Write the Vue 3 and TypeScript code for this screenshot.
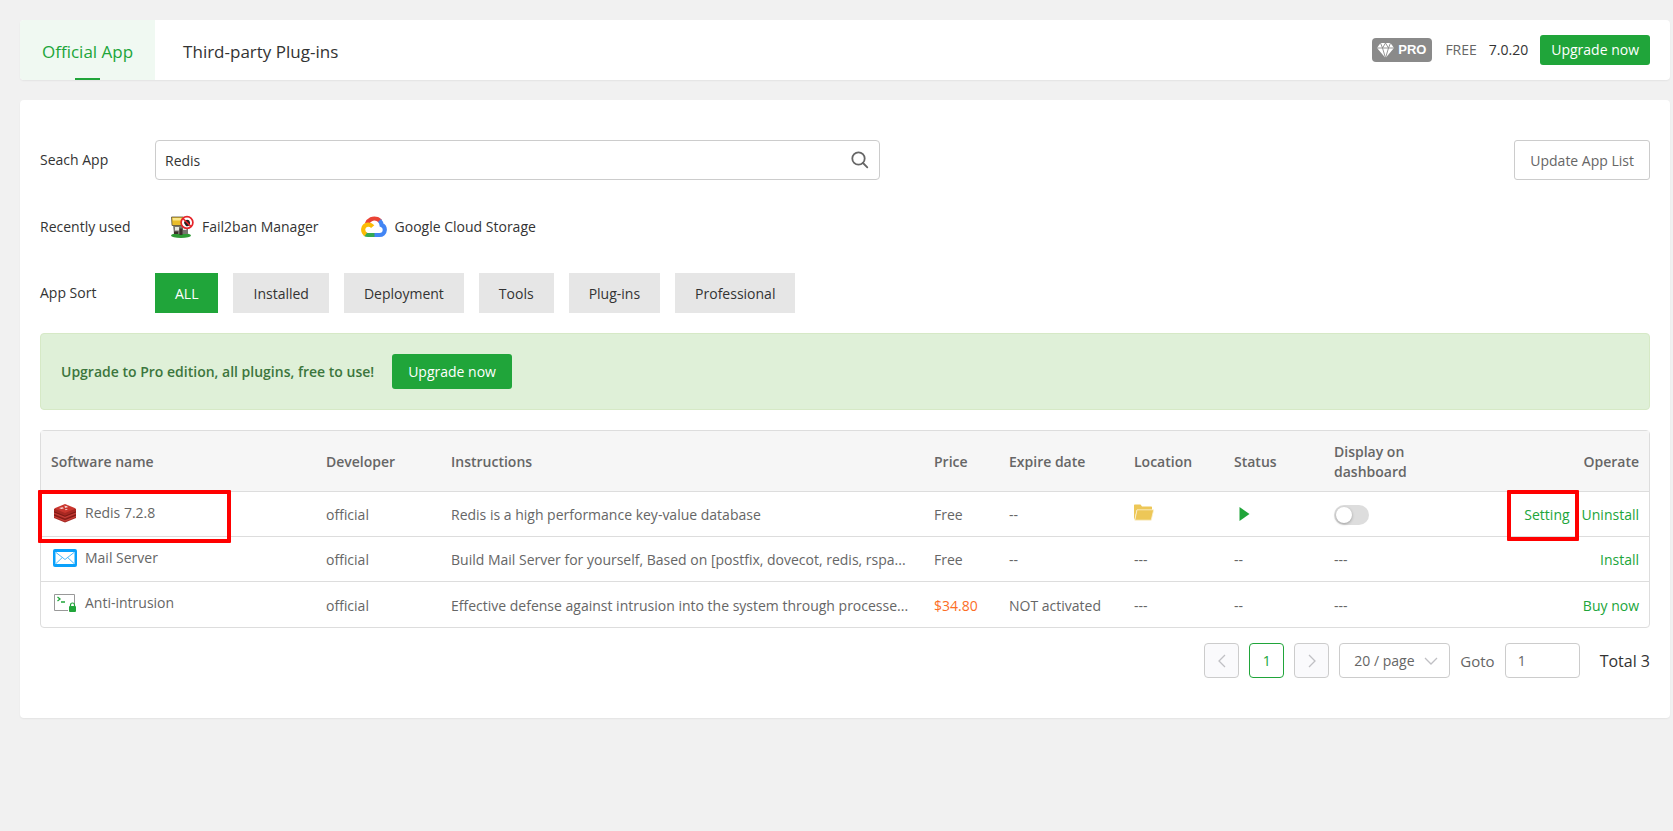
<script setup lang="ts">
import { ref } from 'vue'

interface App {
  id: string
  name: string
  developer: string
  instructions: string
  price: string
  paid?: boolean
  expire: string
  installed?: boolean
  actions: string[]
}

const tabs = ['Official App', 'Third-party Plug-ins']
const activeTab = ref('Official App')

const keyword = ref('Redis')

const sorts = ['ALL', 'Installed', 'Deployment', 'Tools', 'Plug-ins', 'Professional']
const activeSort = ref('ALL')

const apps: App[] = [
  {
    id: 'redis',
    name: 'Redis 7.2.8',
    developer: 'official',
    instructions: 'Redis is a high performance key-value database',
    price: 'Free',
    expire: '--',
    installed: true,
    actions: ['Setting', 'Uninstall'],
  },
  {
    id: 'mail',
    name: 'Mail Server',
    developer: 'official',
    instructions: 'Build Mail Server for yourself, Based on [postfix, dovecot, redis, rspa...',
    price: 'Free',
    expire: '--',
    actions: ['Install'],
  },
  {
    id: 'intrusion',
    name: 'Anti-intrusion',
    developer: 'official',
    instructions: 'Effective defense against intrusion into the system through processe...',
    price: '$34.80',
    paid: true,
    expire: 'NOT activated',
    actions: ['Buy now'],
  },
]

const onDashboard = ref(false)
const pageSize = ref('20')
const gotoPage = ref('1')
</script>

<template>
  <div class="page">
    <header class="topbar">
      <nav class="tabs">
        <button
          v-for="tab in tabs"
          :key="tab"
          type="button"
          class="tab"
          :class="{ active: tab === activeTab }"
          @click="activeTab = tab"
        >
          {{ tab }}
        </button>
      </nav>
      <div class="account">
        <span class="pro">
          <svg width="17" height="15" viewBox="0 0 17 15" aria-hidden="true">
            <path d="M3.5 0h10L17 5 8.5 15 0 5z" fill="#fff" />
            <path d="M0 5h17M5.500 5 8.500 15 11.500 5M3.500 0l2 5 3-5 3 5 2-5" fill="none" stroke="#8a8a8a" stroke-width=".9" />
          </svg>
          PRO
        </span>
        <span class="free">FREE</span>
        <span class="version">7.0.20</span>
        <button type="button" class="btn-green small">Upgrade now</button>
      </div>
    </header>

    <main class="panel">
      <div class="row search-row">
        <label class="label" for="app-search">Seach App</label>
        <div class="search">
          <input id="app-search" v-model="keyword" type="text" />
          <button type="button" class="search-btn" aria-label="Search">
            <svg width="18" height="18" viewBox="0 0 18 18" fill="none" stroke="#666" stroke-width="1.8" stroke-linecap="round">
              <circle cx="7.500" cy="7.500" r="6.200" />
              <path d="M12 12l4.300 4.300" />
            </svg>
          </button>
        </div>
        <button type="button" class="btn-outline">Update App List</button>
      </div>

      <div class="row recent-row">
        <span class="label">Recently used</span>
        <div class="recent">
          <a href="#" class="recent-item">
            <svg width="24" height="24" viewBox="0 0 24 24" aria-hidden="true">
              <ellipse cx="11" cy="20.500" rx="10" ry="2.600" fill="#2f9a35" />
              <path d="M3 10h15v9H4z" fill="#77756f" />
              <path d="M5 12h4v3.500H5zM13 12h3.500v3H13z" fill="#e8e8e0" />
              <path d="M9.500 13.500h3V20h-3zM4 16.500h4V19H4z" fill="#3b302b" />
              <path d="M1.500 2h12l4 8.500H2z" fill="#e9bd2b" stroke="#5b5440" stroke-width=".8" />
              <path d="M2.500 3h9v2.500H3z" fill="#fbe789" />
              <circle cx="17" cy="7.500" r="5.900" fill="#fff" />
              <path d="M14 8c0-3 5-5 6-.5.500 3-2 4.500-4 3.500z" fill="#222" />
              <circle cx="17" cy="7.500" r="5.900" fill="none" stroke="#e5252b" stroke-width="1.700" />
              <path d="M13 3.500l8 8" stroke="#e5252b" stroke-width="1.700" />
            </svg>
            Fail2ban Manager
          </a>
          <a href="#" class="recent-item">
            <svg width="26" height="22" viewBox="0 0 26 22" fill="none" stroke-width="4.200" aria-hidden="true">
              <path d="M5.800 8C7.500 3.500 12 1.500 16.300 3a8 8 0 0 1 3 2.200" stroke="#ea4335" />
              <path d="M18.500 4.500c1.200 1.200 1.900 2.600 2.100 4.500 2 .8 3.300 2.700 3.200 5-.1 3-2.500 5-5.300 5H13" stroke="#4285f4" />
              <path d="M13.500 19H7c-1.200 0-2.200-.3-3.200-1" stroke="#34a853" />
              <path d="M4.800 18.500C.8 15.500 1.500 9.500 6.500 8.600c2-.3 3.800.3 5.200 2" stroke="#fbbc05" />
            </svg>
            Google Cloud Storage
          </a>
        </div>
      </div>

      <div class="row sort-row">
        <span class="label">App Sort</span>
        <div class="sorts">
          <button
            v-for="sort in sorts"
            :key="sort"
            type="button"
            class="sort"
            :class="{ active: sort === activeSort }"
            @click="activeSort = sort"
          >
            {{ sort }}
          </button>
        </div>
      </div>

      <section class="banner">
        <span>Upgrade to Pro edition, all plugins, free to use!</span>
        <button type="button" class="btn-green">Upgrade now</button>
      </section>

      <table class="apps">
        <thead>
          <tr>
            <th class="c-name">Software name</th>
            <th class="c-dev">Developer</th>
            <th>Instructions</th>
            <th class="c-price">Price</th>
            <th class="c-expire">Expire date</th>
            <th class="c-location">Location</th>
            <th class="c-status">Status</th>
            <th class="c-display">Display on dashboard</th>
            <th class="c-operate">Operate</th>
          </tr>
        </thead>
        <tbody>
          <tr v-for="app in apps" :key="app.id">
            <td class="c-name">
              <div class="app-name">
                <svg v-if="app.id === 'redis'" width="24" height="20" viewBox="0 0 24 20" aria-hidden="true">
                  <path d="M1 6v9l11 4.500L23 15V6z" fill="#a82822" />
                  <path d="M1 8.800l11 4.400 11-4.400M1 12l11 4.400L23 12" fill="none" stroke="#7d1a15" stroke-width="1" />
                  <path d="M1 10.200l11 4.400 11-4.400M1 13.500l11 4.400 11-4.400" fill="none" stroke="#c6403a" stroke-width="1" />
                  <path d="M1 5.500 12 1l11 4.500L12 10z" fill="#c9352d" />
                  <path d="M6 5l3.500-.8 1.500 1-2.500.8zM11.500 2.500l1.500.7 1.800-.4-.8 1.100 1 .6-2 .1-1 .5zM12 6l3 .2-2.200 1.100z" fill="#f7dedc" />
                </svg>
                <svg v-else-if="app.id === 'mail'" width="24" height="18" viewBox="0 0 24 18" aria-hidden="true">
                  <rect width="24" height="18" rx="2" fill="#0aa1fb" />
                  <rect x="2.500" y="3" width="19" height="12" fill="#fff" />
                  <path d="M3 3.500l9 7 9-7M3 14.500l6.300-6M21 14.500l-6.300-6" fill="none" stroke="#4bb9fb" stroke-width="1" />
                </svg>
                <svg v-else width="24" height="20" viewBox="0 0 24 20" fill="none" aria-hidden="true">
                  <path d="M15 17.500H1.500v-16h20V11" stroke="#999" stroke-width="1" />
                  <path d="M4.500 4l2.500 2-2.500 2M8 9h4" stroke="#20a53a" stroke-width="1.300" />
                  <rect x="16" y="13" width="7" height="6" rx="1" fill="#20a53a" />
                  <path d="M17.500 13v-1a2 2 0 0 1 4 0v1" stroke="#20a53a" stroke-width="1.200" />
                </svg>
                <span>{{ app.name }}</span>
              </div>
              <span v-if="app.installed" class="mark mark-name"></span>
            </td>
            <td>{{ app.developer }}</td>
            <td class="instructions">{{ app.instructions }}</td>
            <td :class="{ paid: app.paid }">{{ app.price }}</td>
            <td>{{ app.expire }}</td>
            <td>
              <button v-if="app.installed" type="button" class="icon-btn" aria-label="Open folder">
                <svg width="20" height="17" viewBox="0 0 20 17" aria-hidden="true">
                  <path d="M0 1.200Q0 .5.700.5h5.800l1.500 2h9.300q.7 0 .7.700V6H0z" fill="#edc757" />
                  <path d="M0 5h3L.5 15.500 0 15z" fill="#edc757" />
                  <path d="M3 5.800h16.700l-2.500 10.400H.8z" fill="#edc757" stroke="#fbf1d3" stroke-width=".8" />
                </svg>
              </button>
              <template v-else>---</template>
            </td>
            <td>
              <button v-if="app.installed" type="button" class="icon-btn play" aria-label="Running">
                <svg width="11" height="14" viewBox="0 0 11 14" aria-hidden="true">
                  <path d="M.5 0 10.500 7 .5 14z" fill="#20a53a" />
                </svg>
              </button>
              <template v-else>--</template>
            </td>
            <td>
              <input
                v-if="app.installed"
                v-model="onDashboard"
                type="checkbox"
                class="switch"
                aria-label="Display on dashboard"
              />
              <template v-else>---</template>
            </td>
            <td class="c-operate">
              <div class="actions">
                <span v-for="action in app.actions" :key="action" class="action">
                  <a href="#">{{ action }}</a>
                  <span v-if="action === 'Setting'" class="mark mark-action"></span>
                </span>
              </div>
            </td>
          </tr>
        </tbody>
      </table>

      <footer class="pager">
        <button type="button" class="page-btn" disabled aria-label="Previous page">
          <svg width="8" height="14" viewBox="0 0 8 14" fill="none" stroke="#c0c0c4" stroke-width="1.300"><path d="M7 1 1 7l6 6" /></svg>
        </button>
        <button type="button" class="page-btn current">1</button>
        <button type="button" class="page-btn" disabled aria-label="Next page">
          <svg width="8" height="14" viewBox="0 0 8 14" fill="none" stroke="#c0c0c4" stroke-width="1.300"><path d="M1 1l6 6-6 6" /></svg>
        </button>
        <div class="size">
          <select v-model="pageSize" aria-label="Rows per page">
            <option value="20">20 / page</option>
            <option value="50">50 / page</option>
            <option value="100">100 / page</option>
          </select>
          <svg width="14" height="8" viewBox="0 0 14 8" fill="none" stroke="#c0c0c4" stroke-width="1.300" aria-hidden="true"><path d="M1 1l6 6 6-6" /></svg>
        </div>
        <label class="goto-label" for="goto-page">Goto</label>
        <input id="goto-page" v-model="gotoPage" type="text" class="goto" />
        <span class="total">Total 3</span>
      </footer>
    </main>
  </div>
</template>

<style>
body {
  background: #f1f1f1;
}
</style>

<style scoped>
.page {
  box-sizing: border-box;
  padding: 20px 3px 20px 20px;
  font-family: "Open Sans", "Noto Sans", sans-serif;
  font-size: 14px;
  line-height: 20px;
  color: #333;
}

.page * {
  box-sizing: border-box;
}

button,
input,
select {
  font: inherit;
  color: inherit;
  margin: 0;
}

button {
  cursor: pointer;
}

a {
  color: inherit;
  text-decoration: none;
}

.topbar {
  display: flex;
  justify-content: space-between;
  height: 60px;
  background: #fff;
  border-radius: 4px;
  box-shadow: 0 1px 2px rgba(0, 0, 0, 0.06);
  overflow: hidden;
}

.tabs {
  display: flex;
}

.tab {
  position: relative;
  padding: 4px 28px 0;
  border: 0;
  background: none;
  font-size: 17px;
}

.tab.active {
  padding: 4px 22px 0;
  background: #f0f9f2;
  color: #20a53a;
}

.tab.active::after {
  content: "";
  position: absolute;
  bottom: 0;
  left: 50%;
  width: 25px;
  height: 2px;
  margin-left: -13px;
  background: #20a53a;
}

.account {
  display: flex;
  align-items: center;
  padding-right: 20px;
}

.pro {
  display: flex;
  align-items: center;
  gap: 4px;
  height: 24px;
  padding: 0 6px 0 5px;
  margin-right: 13px;
  border-radius: 4px;
  background: #8a8a8a;
  color: #fff;
  font-family: "Liberation Sans", Arial, sans-serif;
  font-weight: 700;
  font-size: 13px;
}

.free {
  margin-right: 12px;
  color: #666;
}

.version {
  margin-right: 12px;
}

.btn-green {
  height: 35px;
  padding: 0 16px;
  border: 0;
  border-radius: 3px;
  background: #20a53a;
  color: #fff;
}

.btn-green.small {
  height: 30px;
  padding: 0 11px;
}

.panel {
  margin-top: 20px;
  padding: 40px 20px;
  background: #fff;
  border-radius: 4px;
  box-shadow: 0 1px 2px rgba(0, 0, 0, 0.06);
}

.row {
  display: flex;
  align-items: center;
}

.label {
  flex: none;
  width: 115px;
}

.search {
  position: relative;
  width: 45%;
}

.search input {
  display: block;
  width: 100%;
  height: 40px;
  padding: 0 40px 0 9px;
  border: 1px solid #ccc;
  border-radius: 4px;
  outline: none;
}

.search-btn {
  position: absolute;
  top: 11px;
  right: 11px;
  padding: 0;
  border: 0;
  background: none;
}

.search-btn svg,
.icon-btn svg {
  display: block;
}

.btn-outline {
  height: 40px;
  margin-left: auto;
  padding: 2px 15px 0;
  border: 1px solid #ccc;
  border-radius: 3px;
  background: #fff;
  color: #666;
}

.recent-row {
  height: 93px;
}

.recent {
  display: flex;
  gap: 42px;
  padding-left: 15px;
}

.recent-item {
  display: flex;
  align-items: center;
  gap: 8px;
}

.sorts {
  display: flex;
  gap: 15px;
}

.sort {
  height: 40px;
  padding: 2px 20px 0;
  border: 0;
  background: #e6e6e6;
}

.sort.active {
  background: #20a53a;
  color: #fff;
}

.banner {
  display: flex;
  align-items: center;
  gap: 18px;
  height: 77px;
  margin-top: 20px;
  padding: 0 20px;
  border: 1px solid #d6e9c6;
  border-radius: 4px;
  background: #dff0d8;
  color: #3c763d;
  font-weight: 600;
}

.banner .btn-green {
  font-weight: 400;
}

.apps {
  width: 100%;
  margin-top: 20px;
  table-layout: fixed;
  border: 1px solid #ddd;
  border-radius: 4px;
  border-spacing: 0;
  color: #666;
}

th {
  height: 61px;
  padding: 2px 10px 0;
  background: #f6f6f6;
  border-bottom: 1px solid #ddd;
  font-weight: 600;
  text-align: left;
}

td {
  position: relative;
  height: 45px;
  padding: 2px 10px 0;
  border-bottom: 1px solid #ddd;
}

tr:last-child td {
  border-bottom: 0;
}

.c-name { width: 275px; }
.c-dev { width: 125px; }
.c-price { width: 75px; }
.c-expire { width: 125px; }
.c-location { width: 100px; }
.c-status { width: 100px; }
.c-display { width: 100px; }
.c-operate { width: 225px; text-align: right; }

.instructions {
  overflow: hidden;
  text-overflow: ellipsis;
  white-space: nowrap;
}

.paid {
  color: #fc6d26;
}

.app-name {
  display: flex;
  align-items: center;
  gap: 8px;
  padding: 0 0 5px 2px;
}

.mark {
  position: absolute;
  border: 4px solid #f00;
  border-radius: 1px;
  pointer-events: none;
}

.mark-name {
  top: -2px;
  left: -3px;
  width: 193px;
  height: 53px;
  z-index: 1;
}

.mark-action {
  inset: -15px -9px -16px -17px;
}

.icon-btn {
  display: block;
  padding: 0 0 5px;
  border: 0;
  background: none;
}

.icon-btn.play {
  padding: 0 5px 3px;
}

.switch {
  appearance: none;
  display: block;
  width: 35px;
  height: 20px;
  padding: 2px;
  border-radius: 10px;
  background: #ddd;
  cursor: pointer;
}

.switch::before {
  content: "";
  display: block;
  width: 16px;
  height: 16px;
  border-radius: 50%;
  background: #fff;
  box-shadow: 0 1px 3px rgba(0, 0, 0, 0.3);
}

.switch:checked {
  background: #20a53a;
}

.switch:checked::before {
  margin-left: 15px;
}

.actions {
  display: flex;
  justify-content: flex-end;
  gap: 12px;
  color: #20a53a;
}

.action {
  position: relative;
}

.pager {
  display: flex;
  align-items: center;
  justify-content: flex-end;
  gap: 10px;
  margin-top: 15px;
  color: #666;
}

.page-btn {
  display: grid;
  place-items: center;
  width: 35px;
  height: 35px;
  padding: 0;
  border: 1px solid #ccc;
  border-radius: 4px;
  background: #fafafc;
}

.page-btn.current {
  border-color: #20a53a;
  background: #fff;
  color: #20a53a;
}

.size {
  position: relative;
}

.size select {
  appearance: none;
  display: block;
  width: 111px;
  height: 35px;
  padding: 0 14px;
  border: 1px solid #ccc;
  border-radius: 4px;
  background: #fff;
}

.size svg {
  position: absolute;
  top: 14px;
  right: 12px;
  pointer-events: none;
}

.goto-label {
  font-size: 15px;
}

.goto {
  width: 75px;
  height: 35px;
  padding: 0 12px;
  border: 1px solid #ccc;
  border-radius: 4px;
}

.total {
  margin-left: 10px;
  font-size: 16px;
  color: #333;
}
</style>
